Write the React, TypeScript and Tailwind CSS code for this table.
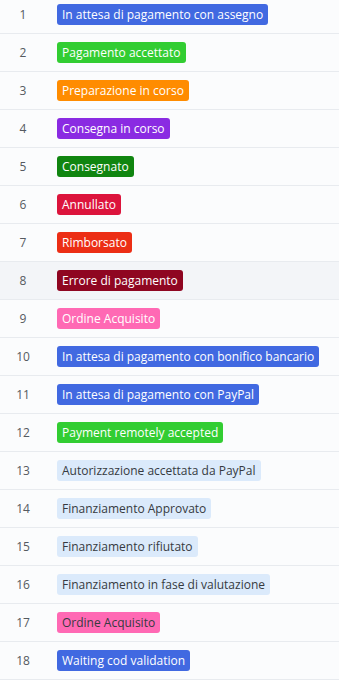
const statuses = [
  { id: 1, name: 'In attesa di pagamento con assegno', bg: 'bg-[#4169e1]', fg: 'text-white' },
  { id: 2, name: 'Pagamento accettato', bg: 'bg-[#32cd32]', fg: 'text-white' },
  { id: 3, name: 'Preparazione in corso', bg: 'bg-[#ff8c00]', fg: 'text-white' },
  { id: 4, name: 'Consegna in corso', bg: 'bg-[#8a2be2]', fg: 'text-white' },
  { id: 5, name: 'Consegnato', bg: 'bg-[#108510]', fg: 'text-white' },
  { id: 6, name: 'Annullato', bg: 'bg-[#dc143c]', fg: 'text-white' },
  { id: 7, name: 'Rimborsato', bg: 'bg-[#ec2e15]', fg: 'text-white' },
  { id: 8, name: 'Errore di pagamento', bg: 'bg-[#8f0621]', fg: 'text-white' },
  { id: 9, name: 'Ordine Acquisito', bg: 'bg-[#ff69b4]', fg: 'text-white' },
  { id: 10, name: 'In attesa di pagamento con bonifico bancario', bg: 'bg-[#4169e1]', fg: 'text-white' },
  { id: 11, name: 'In attesa di pagamento con PayPal', bg: 'bg-[#4169e1]', fg: 'text-white' },
  { id: 12, name: 'Payment remotely accepted', bg: 'bg-[#32cd32]', fg: 'text-white' },
  { id: 13, name: 'Autorizzazione accettata da PayPal', bg: 'bg-[#dbeafb]', fg: 'text-[#363a41]' },
  { id: 14, name: 'Finanziamento Approvato', bg: 'bg-[#dbeafb]', fg: 'text-[#363a41]' },
  { id: 15, name: 'Finanziamento rifiutato', bg: 'bg-[#dbeafb]', fg: 'text-[#363a41]' },
  { id: 16, name: 'Finanziamento in fase di valutazione', bg: 'bg-[#dbeafb]', fg: 'text-[#363a41]' },
  { id: 17, name: 'Ordine Acquisito', bg: 'bg-[#ff69b4]', fg: 'text-[#363a41]' },
  { id: 18, name: 'Waiting cod validation', bg: 'bg-[#4169e1]', fg: 'text-white' },
]

export default function App() {
  return (
    <div className="w-[339px] h-[699px] overflow-hidden bg-white font-['Open_Sans',sans-serif] text-[12px]">
      <div className="-mt-[4px]">
        {statuses.map((s) => (
          <div
            key={s.id}
            className={`flex items-center h-[38px] border-b border-[#e8ebef] ${s.id === 8 ? 'bg-[#f3f5f8]' : 'bg-[#fbfcfd]'}`}
          >
            <div className="w-[46px] text-center text-[#555a60]">{s.id}</div>
            <div className="pl-[11px]">
              <span className={`inline-block whitespace-nowrap rounded-[3px] px-[5px] leading-[21px] ${s.bg} ${s.fg}`}>
                {s.name}
              </span>
            </div>
          </div>
        ))}
      </div>
    </div>
  )
}
